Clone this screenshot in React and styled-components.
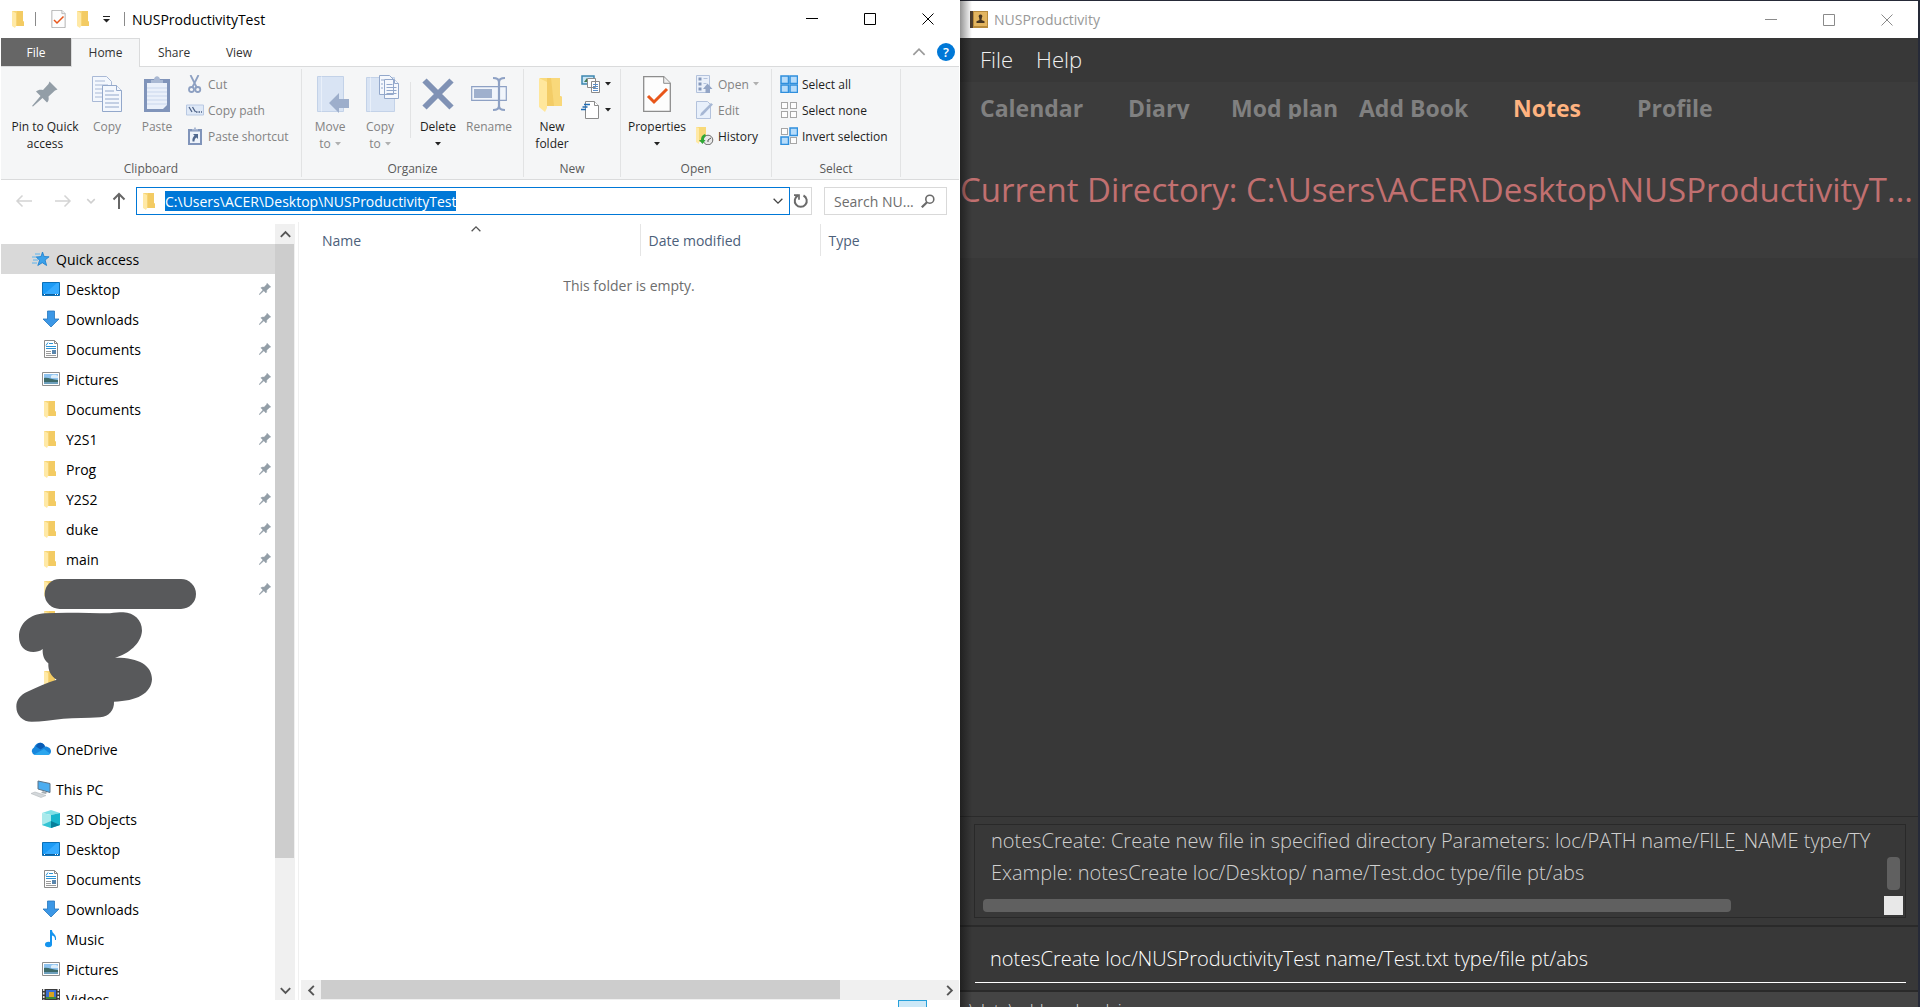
import React from 'react';
import styled, { createGlobalStyle, css } from 'styled-components';

const Global = createGlobalStyle`
  *, *::before, *::after { box-sizing: border-box; }
  body { margin: 0; background: #10131c; overflow: hidden; }
  body, button, input, textarea, table { font-family: "Open Sans", "Noto Sans", sans-serif; }
  button { margin: 0; padding: 0; border: 0; background: none; color: inherit; }
  input, textarea { margin: 0; padding: 0; border: 0; outline: 0; background: none; }
  svg { display: block; flex: none; }
`;

/* ---------- icons ---------- */

const Folder = ({ w = 12, h = 17 }) => (
  <svg width={w} height={h} viewBox="0 0 12 17">
    <path d="M0 0h11v10l1 1v4H0z" fill="#f7d575" />
    <path d="M5 0h6v10l1 1v4H5z" fill="#f3cb63" />
    <path d="M0 0l4 2v13l-1 2-3-2z" fill="#ffe9a6" />
  </svg>
);

const BigFolder = () => (
  <svg width="26" height="36" viewBox="0 0 26 36">
    <path d="M1 2h20v18l2 1v9H1z" fill="#f9da7c" />
    <path d="M8 2h13v18l2 1v9H8z" fill="#f3cc66" />
    <path d="M12 2h9v18l2 1v9h-8z" fill="#fbdd83" opacity=".7" />
    <path d="M0 2l8 4v26l-2 4-6-5z" fill="#ffe79c" />
  </svg>
);

const PIN = 'M17.5 .5l8 8-2.5 1-6.500 6c.5 3.500 0 4.500-1.500 6l-4.500-4.500L1 25.500 0 25l8.500-10L4 10.500c2-1.500 4-2 7-1.500l5.500-6z';
const Pin = ({ size }) => (
  <svg width={size} height={size} viewBox="0 0 26 26"><path d={PIN} fill="#939ea7" stroke="#939ea7" strokeWidth={size < 20 ? 1 : 0} /></svg>
);

const CheckDoc = ({ w, h }) => (
  <svg width={w} height={h} viewBox="0 0 28 36">
    <path d="M.7.7h20l6.600 6.600v28H.7z" fill="#fdfdfd" stroke="#8d8d8d" strokeWidth="1.300" />
    <path d="M20.700.7v6.600h6.600" fill="#eee" stroke="#8d8d8d" />
    <path d="M5 20l6 6L24 13" fill="none" stroke="#e8561a" strokeWidth="3" />
  </svg>
);

const CopyDocs = ({ w = 30, h = 36 }) => (
  <svg width={w} height={h} viewBox="0 0 30 36" fill="#f3f7fd" stroke="#a9b9d6">
    <path d="M.5.500h14l5 5v20H.5z" />
    <path d="M3 5h10M3 9h13M3 13h7M3 17h7M3 21h7" />
    <path d="M10.500 9.500h14l5 5v21h-19z" stroke="#93a8cb" />
    <path d="M24.500 9.500v5h5M13 15h9M13 19h14M13 23h14M13 27h14M13 31h14" stroke="#93a8cb" />
  </svg>
);

const PasteIcon = () => (
  <svg width="26" height="36" viewBox="0 0 26 36">
    <path d="M0 3h26v33H0z" fill="#8094ba" />
    <path d="M3 7h20v22l-4 4H3z" fill="#eaf0fa" />
    <path d="M3 12h20M3 16h20M3 20h20M3 24h20M3 28h20" stroke="#c9d6ec" />
    <path d="M7 7V4h3c0-5 6-5 6 0h3v3z" fill="#a9b8d3" />
  </svg>
);

const CutIcon = () => (
  <svg width="18" height="18" viewBox="0 0 18 18" fill="none" stroke="#8da0c2" strokeWidth="1.800">
    <path d="M4.500 0l6 12M12.500 0l-6 12" /><circle cx="5.500" cy="14.500" r="2.500" /><circle cx="11.800" cy="14.500" r="2.500" />
  </svg>
);

const CopyPathIcon = () => (
  <svg width="18" height="18" viewBox="0 0 18 18">
    <path d="M.5 4h17v10H.5z" fill="#dfe9f7" stroke="#b9c9e3" />
    <path d="M3 6l3 5M6.500 6l3 5M10 11h1.500M12.500 11H14M15 11h1" stroke="#4f6388" strokeWidth="1.300" />
  </svg>
);

const ShortcutIcon = () => (
  <svg width="18" height="18" viewBox="0 0 18 18">
    <path d="M2 2h14v16H2z" fill="#8094ba" /><path d="M4 4.500h10V16H4z" fill="#eef3fb" />
    <path d="M6 3.500V2h2c0-2.500 2-2.500 2 0h2v1.500z" fill="#a9b8d3" />
    <path d="M7 7h5v5l-1.500-1.500c-1.500 1-2 2-2 4H6.500c-.5-3 .5-4.500 2-6z" fill="#51698f" />
  </svg>
);

const MoveIcon = () => (
  <svg width="38" height="38" viewBox="-6 0 38 38">
    <path d="M.5 1.500h26v35H.5z" fill="#d9e4f4" stroke="#c3d2e8" /><path d="M4.500 1.500v35" stroke="#e9f0fa" />
    <path d="M12 28l10-10v6h10v9H22v5z" fill="#9daecb" />
  </svg>
);

const CopyToIcon = () => (
  <svg width="40" height="38" viewBox="-6 0 40 38">
    <path d="M.5 2.500h28v34H.5z" fill="#d9e4f4" stroke="#c3d2e8" /><path d="M4.500 2.500v34" stroke="#e9f0fa" />
    <g fill="#f5f8fd" stroke="#93a8cb">
      <path d="M13.500.5h10l4 4v15h-14zM18.500 4.500h10l4 4v15h-14z" />
      <path d="M28.500 4.500v4h4M20.500 9.500h6M20.500 12.500h10M20.500 15.500h10M20.500 18.500h10M15 5h3M15 9h2M15 13h2" />
    </g>
  </svg>
);

const DeleteIcon = () => (
  <svg width="32" height="38" viewBox="0 0 32 38"><path d="M2.500 5.500l27 27M29.500 5.500l-27 27" stroke="#8092b5" strokeWidth="6" /></svg>
);

const RenameIcon = () => (
  <svg width="36" height="36" viewBox="0 0 36 36" fill="none">
    <path d="M.7 10.700h34.600v13.600H.7z" fill="#f1f5fb" stroke="#8ea1c4" strokeWidth="1.200" /><path d="M3 13h18v9H3z" fill="#9fb0cd" />
    <path d="M22 2c4 0 6 1 6 4v24c0 3-2 4-6 4M34 2c-4 0-6 1-6 4v24c0 3 2 4 6 4" stroke="#8ea1c4" strokeWidth="2.200" />
  </svg>
);

const NewItemIcon = () => (
  <svg width="20" height="20" viewBox="0 0 20 20" fill="#fff" stroke="#8a8a8a">
    <path d="M1 2h12v8H1z" fill="#c9e6f7" stroke="#3d87b0" strokeWidth="1.500" /><path d="M3 8l3-4 2 4z" fill="#3f7b4f" stroke="none" />
    <path d="M6.500 4.500h8v9h-8zM10.500 7.500h8v11h-8z" /><path d="M12 10.500h5M12 12.500h5M12 14.500h5M12 16.500h5" stroke="#5b8fc9" />
  </svg>
);

const EasyAccessIcon = () => (
  <svg width="20" height="20" viewBox="0 0 20 20" fill="#fff" stroke="#8a8a8a">
    <path d="M4.500 1.500h9l4 4v13h-13z" /><path d="M13.500 1.500v4h4" />
    <path d="M3 4.500h6M1.500 7h5M0 9.500h5" stroke="#1f6cb5" strokeWidth="1.400" />
  </svg>
);

const OpenIcon = () => (
  <svg width="18" height="18" viewBox="0 0 18 18">
    <path d="M.5.500h13v17H.5z" fill="#eaf0fa" stroke="#b3c2dc" /><path d="M2.500 2.500h3v3h-3zM2.500 7.500h3v3h-3zM2.500 12.500h3v3h-3z" fill="#8497ba" />
    <path d="M7.500 3.500h4M7.500 8.500h3" stroke="#b3c2dc" /><path d="M11.500 8.500l5 5.500H14v4H9.500v-4H7z" fill="#93a5c6" />
  </svg>
);

const EditIcon = () => (
  <svg width="18" height="18" viewBox="0 0 18 18">
    <path d="M.5.500h11l3 3v14H.5z" fill="#e8f0fb" stroke="#b3c2dc" /><path d="M4 15l1-3 10-10 2 1.500L7 14z" fill="#a6b7d4" />
  </svg>
);

const HistoryIcon = () => (
  <svg width="18" height="18" viewBox="0 0 18 18">
    <path d="M0 0h10v15H0z" fill="#f8d978" /><path d="M0 0l3 1v16l-3-2z" fill="#ffe9a6" />
    <circle cx="12" cy="13" r="4.800" fill="#e8e8e8" stroke="#6c6c6c" /><path d="M12 13l3-2M12 13v2" stroke="#555" />
    <path d="M9 7c-3 1-4 3-4 6H3l3.500 4 3-4H8c0-2 .5-3.500 2-4z" fill="#2fa836" />
  </svg>
);

const TILE_ON = { fill: '#b7dcfa', stroke: '#2f8fdd', strokeWidth: 1.5 };
const TILE_OFF = { fill: '#fdfdfd', stroke: '#a6a6a6', strokeWidth: 1 };
const SelectIcon = ({ tiles }) => (
  <svg width="18" height="18" viewBox="0 0 18 18">
    {tiles.map((on, i) => {
      const x = (i % 2) * 9 + 1;
      const y = Math.floor(i / 2) * 9 + 1;
      return <rect key={i} x={on ? x : x + 0.5} y={on ? y : y + 0.5} width={on ? 7.500 : 6} height={on ? 7.500 : 6} {...(on ? TILE_ON : TILE_OFF)} />;
    })}
  </svg>
);

const Star = () => (
  <svg width="20" height="18" viewBox="0 0 20 18">
    <path d="M11.500 2l1.600 4.500 5 .3-4 3.200 1.500 5.500-4.300-2.800-4.500 2.800 1.800-5.300-3.600-3.200 5-.4z" fill="#3ba1ea" stroke="#1b7ccb" strokeWidth=".8" />
    <path d="M4 4h5M1 7h5M2 10h5M1 13h5" stroke="#5db4ee" />
  </svg>
);

const DesktopIcon = () => (
  <svg width="18" height="14" viewBox="0 0 18 14">
    <path d="M.5.500h17v13H.5z" fill="#1c9bf6" stroke="#0a70b8" /><path d="M1 13L15 1h2v12z" fill="#36abff" /><path d="M1 12.500h16" stroke="#0f5f9c" />
    <path d="M2 12.500h1M13 12.500h1M15 12.500h1" stroke="#fff" />
  </svg>
);

const DownloadIcon = () => (
  <svg width="18" height="18" viewBox="0 0 18 18"><path d="M5.500 1h7v8H17l-8 8-8-8h4.500z" fill="#3b97e6" stroke="#2676bd" strokeWidth=".8" /></svg>
);

const DocIcon = () => (
  <svg width="18" height="18" viewBox="0 0 18 18">
    <path d="M2.500.500h10l3 3v14h-13z" fill="#fff" stroke="#8a8a8a" /><path d="M12.500.500v3h3" fill="none" stroke="#8a8a8a" />
    <path d="M4 5.500l2-3M7 3.500h4M4 6.500h10M4 8.500h10" stroke="#2b93d6" /><path d="M4 11.500h5M4 13.500h5M4 15.500h10" stroke="#9a9a9a" />
    <path d="M10 10h4v4h-4z" fill="#5a86ad" />
  </svg>
);

const PictureIcon = () => (
  <svg width="18" height="14" viewBox="0 0 18 14">
    <path d="M.5.500h17v13H.5z" fill="#fff" stroke="#8f8f8f" /><path d="M2 2h14v10H2z" fill="#8fc3ef" />
    <path d="M2 6c4-1 8 2 14 2v4H2z" fill="#3e6b6a" /><path d="M2 10h14v2H2z" fill="#6ea0bd" /><path d="M9 4c2-2 5-1 7 0v2H9z" fill="#dcedfa" />
  </svg>
);

const CloudIcon = () => (
  <svg width="20" height="14" viewBox="0 0 20 14">
    <path d="M4 13a4 4 0 0 1-1-7.500C5 0 12-1 14 4.500c4 0 6 2.500 6 5S18 13 16 13z" fill="#1786dc" />
    <path d="M5 4.500C7-.5 12-.5 14 4.500L9.500 7.500z" fill="#0a5cb5" /><path d="M3 12.500L13 7l6 4.500c-1 1.500-2 1.500-3 1.500H4z" fill="#2ba6ee" />
  </svg>
);

const PcIcon = () => (
  <svg width="20" height="18" viewBox="0 0 20 18">
    <path d="M7 1l12 2.500v9L7 9z" fill="#4badf0" stroke="#5c7386" /><path d="M12 11l4 1.500-1 1.500-5-1z" fill="#a5adb3" />
    <path d="M0 13.500l4-1.500 11 3.500-5 2z" fill="#d3d7da" stroke="#b3b8bc" strokeWidth=".6" />
  </svg>
);

const CubeIcon = () => (
  <svg width="18" height="18" viewBox="0 0 18 18">
    <path d="M0 3l9-3 9 3-9 2z" fill="#7fe0e6" /><path d="M0 3l9 2v13l-9-3z" fill="#a9eaec" /><path d="M18 3L9 5v13l9-3z" fill="#17b5cc" />
    <path d="M0 15l9-4v7z" fill="#33c3d3" /><path d="M9 11l9 4-9 3z" fill="#067f9a" />
  </svg>
);

const MusicIcon = () => (
  <svg width="18" height="18" viewBox="0 0 18 18">
    <ellipse cx="6.500" cy="14.500" rx="3.500" ry="2.800" fill="#1594ee" /><path d="M8 0h2c0 4 5 4 4 10h-1c0-3-1-4-3-4.500V15H8z" fill="#1594ee" />
  </svg>
);

const VideoIcon = () => (
  <svg width="18" height="20" viewBox="0 0 18 20">
    <path d="M0 0h18v20H0z" fill="#3b3b3b" /><path d="M4 1h10v8H4z" fill="#3c6fd1" /><path d="M7 3h5v5H7z" fill="#d9a520" /><path d="M4 8h10v2H4z" fill="#3c8a3a" />
    <path d="M1.700 0v20M16.300 0v20" stroke="#e6e6e6" strokeWidth="1.600" strokeDasharray="2 1.500" /><path d="M4 12h10v7H4z" fill="#c04040" />
  </svg>
);

const BookIcon = () => (
  <svg width="18" height="17" viewBox="0 0 18 17">
    <path d="M0 0h18v17H0z" fill="#b78a3b" /><path d="M4 1h13v14H4z" fill="#e3b55f" /><path d="M0 0h3v17H0z" fill="#4d3d2d" />
    <path d="M10.500 3.500a1.800 1.800 0 0 1 1.400 3L11.500 9l3 1.200V12h-8v-1.800l3-1.200-.4-2.500a1.800 1.800 0 0 1 1.400-3z" fill="#463522" />
  </svg>
);

const Chevron = ({ dir = 'down', w = 8, color = '#555', stroke = 2 }) => {
  const turn = { down: 0, left: 90, up: 180, right: 270 }[dir];
  return (
    <svg width={w + 4} height={w + 4} viewBox="-8 -8 16 16">
      <path d="M-5-2.500L0 2.500 5-2.500" fill="none" stroke={color} strokeWidth={stroke} transform={`rotate(${turn})`} />
    </svg>
  );
};

const Arrow = ({ dir, color }) => {
  const turn = { left: 0, up: 90, right: 180 }[dir];
  return (
    <svg width="18" height="18" viewBox="-9 -9 18 18">
      <path d="M8 0H-7M-1.500-5.500L-7 0l5.500 5.500" fill="none" stroke={color} strokeWidth={dir === 'up' ? 2 : 1.500} transform={`rotate(${turn})`} />
    </svg>
  );
};

const Caret = ({ color = '#222' }) => (
  <svg width="6" height="4" viewBox="0 0 6 4"><path d="M0 0h6L3 3.500z" fill={color} /></svg>
);

const RefreshIcon = () => (
  <svg width="16" height="16" viewBox="0 0 16 16" fill="none" stroke="#6a6a6a" strokeWidth="2">
    <path d="M10.500 2.500A6 6 0 1 1 5 2.500" /><path d="M1 2.200h5v4.500" strokeWidth="1.700" />
  </svg>
);

const SearchIcon = () => (
  <svg width="14" height="14" viewBox="0 0 14 14" fill="none" stroke="#6a6a6a">
    <circle cx="8.800" cy="5.200" r="4" strokeWidth="1.600" /><path d="M6 8.200L.8 13.300" strokeWidth="2.200" />
  </svg>
);

const GLYPHS = {
  Minimize: <path d="M0 5.500h12" />,
  Maximize: <path d="M.5.500h11v11H.5z" />,
  Close: <path d="M.5.500l11 11M11.500.500l-11 11" />,
};

/* ---------- shared window parts ---------- */

const Screen = styled.div`
  display: grid;
  grid-template-columns: minmax(0, 1fr) minmax(0, 1fr);
  height: 100vh;
`;

const WindowControls = styled.div`
  display: flex;
  margin-left: auto;
  padding-right: 2px;
  align-self: stretch;
`;

const WindowButton = styled.button`
  display: flex;
  align-items: center;
  justify-content: center;
  width: 58px;
`;

const Controls = ({ color }) => (
  <WindowControls>
    {Object.keys(GLYPHS).map((name) => (
      <WindowButton key={name} aria-label={name}>
        <svg width="12" height="12" fill="none" stroke={color}>{GLYPHS[name]}</svg>
      </WindowButton>
    ))}
  </WindowControls>
);

/* ---------- explorer ---------- */

const Explorer = styled.section`
  display: flex;
  flex-direction: column;
  min-width: 0;
  height: 100vh;
  padding: 0 1px;
  background: #fff;
  color: #000;
  font-size: 14px;
`;

const ExplorerTitle = styled.header`
  display: flex;
  align-items: center;
  flex: none;
  gap: 11px;
  height: 38px;
  padding-left: 11px;
  h1 { margin: 0 0 0 -4px; font-size: 14px; font-weight: 400; }
`;

const Divider = styled.span`
  width: 1px;
  height: 14px;
  background: #8a8a8a;
`;

const QuickTools = styled.div`
  display: flex;
  align-items: center;
  gap: 11px;
  padding-left: 4px;
`;

const QuickButton = styled.button`
  display: flex;
  justify-content: center;
`;

const TabRow = styled.nav`
  display: flex;
  flex: none;
  height: 28px;
  font-size: 12px;
  color: #333;
`;

const Tab = styled.button`
  width: ${(p) => p.$width}px;
  font-size: 12px;
  ${(p) => p.$kind === 'file' && css`background: #666; color: #fff;`}
  ${(p) => p.$kind === 'active' && css`
    background: #f5f6f7;
    border: 1px solid #dadbdc;
    border-bottom: 0;
    z-index: 1;
    margin-bottom: -1px;
    padding-bottom: 2px;
  `}
`;

const TabTools = styled.div`
  display: flex;
  align-items: center;
  gap: 9px;
  margin-left: auto;
  padding-right: 4px;
`;

const HelpButton = styled.button`
  width: 18px;
  height: 18px;
  border-radius: 50%;
  background: #0078d7;
  color: #fff;
  font-size: 13px;
  font-weight: 600;
  line-height: 18px;
`;

const Ribbon = styled.div`
  display: flex;
  flex: none;
  height: 114px;
  padding: 2px 0;
  background: #f5f6f7;
  border-top: 1px solid #dadbdc;
  border-bottom: 1px solid #dadbdc;
`;

const Group = styled.fieldset`
  display: flex;
  flex-direction: column;
  min-width: ${(p) => p.$width}px;
  margin: 0;
  padding: 0;
  border: 0;
  border-right: 1px solid #e2e3e4;
`;

const GroupBody = styled.div`
  display: flex;
  flex: 1;
  padding-left: ${(p) => p.$inset}px;
`;

const GroupLabel = styled.span`
  height: 16px;
  line-height: 16px;
  text-align: center;
  font-size: 12px;
  color: #5a5a5a;
`;

const BigButton = styled.button`
  display: flex;
  flex-direction: column;
  align-items: center;
  justify-content: flex-start;
  width: ${(p) => p.$width}px;
  color: ${(p) => (p.$off ? '#838383' : '#1e1e1e')};
  font-size: 12px;
  line-height: 17px;
  white-space: nowrap;
`;

const BigIcon = styled.span`
  display: flex;
  align-items: center;
  justify-content: center;
  height: 38px;
  margin: 6px 0 5px;
`;

const LabelLine = styled.span`
  display: flex;
  align-items: center;
  gap: 4px;
  min-height: 17px;
`;

const GroupSplit = styled.span`
  width: 1px;
  height: 56px;
  margin: 13px 2px 0 5px;
  background: #e2e3e4;
`;

const SmallColumn = styled.div`
  display: flex;
  flex-direction: column;
  padding: 2px 0 0 ${(p) => p.$inset}px;
`;

const SmallButton = styled.button`
  display: flex;
  align-items: center;
  gap: 4px;
  height: 26px;
  color: ${(p) => (p.$off ? '#838383' : '#1e1e1e')};
  font-size: 12px;
  white-space: nowrap;
`;

const Big = ({ icon, lines, width, off, caret }) => (
  <BigButton $width={width} $off={off}>
    <BigIcon>{icon}</BigIcon>
    {lines.map((line, i) => (
      <LabelLine key={i}>
        {line}
        {caret && i === lines.length - 1 && <Caret color={off ? '#b0b0b0' : '#222'} />}
      </LabelLine>
    ))}
  </BigButton>
);

const Small = ({ icon, label, off, caret, name }) => (
  <SmallButton $off={off} aria-label={name}>
    {icon}
    {label}
    {caret && <Caret color={off ? '#b0b0b0' : '#222'} />}
  </SmallButton>
);

const AddressRow = styled.div`
  display: flex;
  align-items: center;
  flex: none;
  height: 42px;
  padding: 0 12px 0 14px;
`;

const NavButtons = styled.div`
  display: flex;
  align-items: center;
  gap: 13px;
  width: 121px;
  button:first-child { margin-right: 8px; }
`;

const AddressBox = styled.div`
  display: flex;
  align-items: center;
  flex: 1;
  min-width: 0;
  height: 28px;
  padding: 0 4px 0 6px;
  border: 1px solid #0078d7;
`;

const AddressInput = styled.input`
  field-sizing: content;
  height: 20px;
  margin: 0 auto 0 10px;
  background: #0078d7;
  color: #fff;
  font-size: 14px;
`;

const RefreshButton = styled.button`
  display: flex;
  align-items: center;
  justify-content: center;
  width: 22px;
  height: 28px;
  border: 1px solid #d9d9d9;
  border-left: 0;
`;

const SearchBox = styled.label`
  display: flex;
  align-items: center;
  width: 123px;
  height: 28px;
  margin-left: 12px;
  padding: 0 11px 0 9px;
  border: 1px solid #d9d9d9;
`;

const SearchInput = styled.input`
  flex: 1;
  min-width: 0;
  font-size: 14px;
  color: #6d6d6d;
  &::placeholder { color: #6d6d6d; opacity: 1; }
`;

const ExplorerBody = styled.div`
  display: flex;
  flex: 1;
  min-height: 0;
`;

const Sidebar = styled.nav`
  position: relative;
  flex: none;
  width: 274px;
  padding-top: 22px;
  overflow: hidden;
`;

const TreeGroup = styled.ul`
  margin: 0 0 10px;
  padding: 0;
  list-style: none;
`;

const TreeRow = styled.li`
  display: flex;
  align-items: center;
  height: 30px;
  padding: 0 4px 0 ${(p) => (p.$root ? 30 : 41)}px;
  background: ${(p) => (p.$selected ? '#d9d9d9' : 'none')};
`;

const TreeIcon = styled.span`
  display: flex;
  justify-content: center;
  width: ${(p) => (p.$root ? 20 : 18)}px;
  margin-right: ${(p) => (p.$root ? 5 : 6)}px;
`;

const TreeLink = styled.a`
  flex: 1;
  color: #000;
  text-decoration: none;
`;

const FolderSlot = styled.span`
  display: flex;
  width: 14px;
`;

const Scribble = styled.svg`
  position: absolute;
  left: 0;
  top: 338px;
`;

const VScroll = styled.div`
  display: flex;
  flex-direction: column;
  flex: none;
  width: 20px;
  margin: 2px 3px 0 0;
  background: #f0f0f0;
`;

const ScrollButton = styled.button`
  display: flex;
  align-items: center;
  justify-content: center;
  flex: none;
  width: 20px;
  height: 20px;
`;

const VThumb = styled.div`
  flex: 0 0 83.4%;
  width: 19px;
  background: #cdcdcd;
`;

const VTrack = styled.div`
  display: flex;
  flex-direction: column;
  flex: 1;
`;

const FilePane = styled.main`
  display: flex;
  flex-direction: column;
  flex: 1;
  min-width: 0;
  border-left: 1px solid #f0f0f0;
`;

const FileTable = styled.table`
  width: 100%;
  margin-top: 2px;
  table-layout: fixed;
  border-collapse: collapse;
  th {
    position: relative;
    height: 32px;
    padding: 0 0 0 8px;
    border-right: 1px solid #e5e5e5;
    color: #4c607a;
    font-weight: 400;
    text-align: left;
  }
  th:first-child { width: 341px; padding-left: 23px; }
  th:nth-child(2) { width: 180px; }
  th:last-child { border-right: 0; }
  td { padding: 20px 0 0; color: #6d6d6d; text-align: center; }
`;

const SortMark = styled.span`
  position: absolute;
  left: 50%;
  top: -2px;
`;

const HScroll = styled.div`
  display: flex;
  height: 20px;
  margin: auto 0 0 2px;
  background: #f0f0f0;
`;

const HTrack = styled.div`
  flex: 1;
`;

const HThumb = styled.div`
  width: 84%;
  height: 19px;
  background: #cdcdcd;
`;

const ExplorerStatus = styled.footer`
  display: flex;
  justify-content: flex-end;
  flex: none;
  height: 7px;
  padding-right: 32px;
  overflow: hidden;
`;

const ViewToggle = styled.button`
  width: 29px;
  height: 24px;
  border: 1px solid #26a0da;
  background: #cce8f7;
`;

const ICONS = {
  desktop: <DesktopIcon />,
  download: <DownloadIcon />,
  doc: <DocIcon />,
  picture: <PictureIcon />,
  folder: <FolderSlot><Folder /></FolderSlot>,
  cube: <CubeIcon />,
  music: <MusicIcon />,
  video: <VideoIcon />,
};

const TREE = [
  {
    root: { icon: <Star />, label: 'Quick access', selected: true },
    items: [
      ['desktop', 'Desktop', true], ['download', 'Downloads', true], ['doc', 'Documents', true], ['picture', 'Pictures', true],
      ['folder', 'Documents', true], ['folder', 'Y2S1', true], ['folder', 'Prog', true], ['folder', 'Y2S2', true],
      ['folder', 'duke', true], ['folder', 'main', true], ['folder', '', true], ['folder', ''], ['folder', ''], ['folder', ''],
      [null, ''],
    ],
  },
  { root: { icon: <CloudIcon />, label: 'OneDrive' }, items: [] },
  {
    root: { icon: <PcIcon />, label: 'This PC' },
    items: [
      ['cube', '3D Objects'], ['desktop', 'Desktop'], ['doc', 'Documents'], ['download', 'Downloads'],
      ['music', 'Music'], ['picture', 'Pictures'], ['video', 'Videos'],
    ],
  },
];

const Tree = () => (
  <Sidebar aria-label="Folders">
    {TREE.map(({ root, items }) => (
      <TreeGroup key={root.label}>
        <TreeRow $root $selected={root.selected}>
          <TreeIcon $root>{root.icon}</TreeIcon>
          <TreeLink href="#">{root.label}</TreeLink>
        </TreeRow>
        {items.map(([icon, label, pinned], i) => (
          <TreeRow key={i}>
            <TreeIcon>{icon && ICONS[icon]}</TreeIcon>
            {label ? <TreeLink href="#">{label}</TreeLink> : <TreeLink as="span" />}
            {pinned && <Pin size={12} />}
          </TreeRow>
        ))}
      </TreeGroup>
    ))}
    <Scribble width="200" height="170" viewBox="3 240 600 510" fill="#58595b">
      <rect x="134" y="297" width="454" height="90" rx="45" />
      <path d="M57 470C57 430 90 402 135 400C200 396 270 400 330 400C345 398 355 397 370 397C402 398 426 420 426 452C424 490 385 522 345 533C415 532 456 555 456 598C454 640 410 664 342 665C343 690 328 709 300 712C260 714 225 714 190 716C155 719 125 725 95 725C68 725 49 706 49 680C49 660 60 645 82 635C110 622 140 608 170 599C152 588 144 572 145 550C132 540 127 525 128 507C120 514 110 516 100 516C75 516 57 498 57 470Z" />
    </Scribble>
  </Sidebar>
);

const ExplorerWindow = () => (
  <Explorer>
    <ExplorerTitle>
      <Folder />
      <Divider />
      <QuickTools>
        <QuickButton aria-label="Properties"><CheckDoc w={15} h={18} /></QuickButton>
        <QuickButton aria-label="New folder"><Folder /></QuickButton>
        <QuickButton aria-label="Customize toolbar">
          <svg width="13" height="7" viewBox="-3 0 13 7"><path d="M0 .5h7" stroke="#222" /><path d="M0 3h7L3.500 6.500z" fill="#222" /></svg>
        </QuickButton>
      </QuickTools>
      <Divider />
      <h1>NUSProductivityTest</h1>
      <Controls color="#000" />
    </ExplorerTitle>

    <TabRow>
      <Tab $width={70} $kind="file">File</Tab>
      <Tab $width={69} $kind="active">Home</Tab>
      <Tab $width={68}>Share</Tab>
      <Tab $width={62}>View</Tab>
      <TabTools>
        <Chevron dir="up" w={14} color="#9a9a9a" stroke={1.5} />
        <HelpButton aria-label="Help">?</HelpButton>
      </TabTools>
    </TabRow>

    <Ribbon>
      <Group $width={301}>
        <GroupBody $inset={7}>
          <Big width={74} icon={<Pin size={26} />} lines={['Pin to Quick', 'access']} />
          <Big width={50} off icon={<CopyDocs />} lines={['Copy']} />
          <Big width={50} off icon={<PasteIcon />} lines={['Paste']} />
          <SmallColumn $inset={4}>
            <Small off icon={<CutIcon />} label="Cut" />
            <Small off icon={<CopyPathIcon />} label="Copy path" />
            <Small off icon={<ShortcutIcon />} label="Paste shortcut" />
          </SmallColumn>
        </GroupBody>
        <GroupLabel>Clipboard</GroupLabel>
      </Group>
      <Group $width={222}>
        <GroupBody $inset={3}>
          <Big width={50} off caret icon={<MoveIcon />} lines={['Move', 'to']} />
          <Big width={50} off caret icon={<CopyToIcon />} lines={['Copy', 'to']} />
          <GroupSplit />
          <Big width={50} caret icon={<DeleteIcon />} lines={['Delete', '']} />
          <Big width={52} off icon={<RenameIcon />} lines={['Rename']} />
        </GroupBody>
        <GroupLabel>Organize</GroupLabel>
      </Group>
      <Group $width={97}>
        <GroupBody $inset={3}>
          <Big width={50} icon={<BigFolder />} lines={['New', 'folder']} />
          <SmallColumn $inset={4}>
            <Small caret icon={<NewItemIcon />} name="New item" />
            <Small caret icon={<EasyAccessIcon />} name="Easy access" />
          </SmallColumn>
        </GroupBody>
        <GroupLabel>New</GroupLabel>
      </Group>
      <Group $width={151}>
        <GroupBody $inset={0}>
          <Big width={72} caret icon={<CheckDoc w={28} h={36} />} lines={['Properties', '']} />
          <SmallColumn $inset={3}>
            <Small off caret icon={<OpenIcon />} label="Open" />
            <Small off icon={<EditIcon />} label="Edit" />
            <Small icon={<HistoryIcon />} label="History" />
          </SmallColumn>
        </GroupBody>
        <GroupLabel>Open</GroupLabel>
      </Group>
      <Group $width={129}>
        <GroupBody $inset={0}>
          <SmallColumn $inset={8}>
            <Small icon={<SelectIcon tiles={[1, 1, 1, 1]} />} label="Select all" />
            <Small icon={<SelectIcon tiles={[0, 0, 0, 0]} />} label="Select none" />
            <Small icon={<SelectIcon tiles={[0, 1, 1, 0]} />} label="Invert selection" />
          </SmallColumn>
        </GroupBody>
        <GroupLabel>Select</GroupLabel>
      </Group>
    </Ribbon>

    <AddressRow>
      <NavButtons>
        <button aria-label="Back"><Arrow dir="left" color="#d4d4d4" /></button>
        <button aria-label="Forward"><Arrow dir="right" color="#d4d4d4" /></button>
        <button aria-label="Recent"><Chevron w={8} color="#cfcfcf" /></button>
        <button aria-label="Up"><Arrow dir="up" color="#666" /></button>
      </NavButtons>
      <AddressBox>
        <Folder />
        <AddressInput aria-label="Address" defaultValue="C:\Users\ACER\Desktop\NUSProductivityTest" />
        <button aria-label="Previous locations"><Chevron w={10} color="#444" stroke={1.5} /></button>
      </AddressBox>
      <RefreshButton aria-label="Refresh"><RefreshIcon /></RefreshButton>
      <SearchBox>
        <SearchInput aria-label="Search" placeholder="Search NU..." />
        <SearchIcon />
      </SearchBox>
    </AddressRow>

    <ExplorerBody>
      <Tree />
      <VScroll>
        <ScrollButton aria-label="Scroll up"><Chevron dir="up" w={11} /></ScrollButton>
        <VTrack><VThumb /></VTrack>
        <ScrollButton aria-label="Scroll down"><Chevron w={11} /></ScrollButton>
      </VScroll>
      <FilePane>
        <FileTable>
          <thead>
            <tr>
              <th scope="col">Name<SortMark><Chevron dir="up" w={10} color="#555" stroke={1.5} /></SortMark></th>
              <th scope="col">Date modified</th>
              <th scope="col">Type</th>
            </tr>
          </thead>
          <tbody>
            <tr><td colSpan={3}>This folder is empty.</td></tr>
          </tbody>
        </FileTable>
        <HScroll>
          <ScrollButton aria-label="Scroll left"><Chevron dir="left" w={11} /></ScrollButton>
          <HTrack><HThumb /></HTrack>
          <ScrollButton aria-label="Scroll right"><Chevron dir="right" w={11} /></ScrollButton>
        </HScroll>
      </FilePane>
    </ExplorerBody>
    <ExplorerStatus><ViewToggle aria-label="Details view" /></ExplorerStatus>
  </Explorer>
);

/* ---------- notes application ---------- */

const Notes = styled.section`
  position: relative;
  display: flex;
  flex-direction: column;
  min-width: 0;
  height: 100vh;
  padding: 1px 2px 0 0;
  background: #262a38;
  color: #e0e0e0;
  &::before {
    content: '';
    position: absolute;
    inset: 0 auto 0 0;
    width: 12px;
    background: linear-gradient(90deg, rgba(0, 0, 0, .42), rgba(0, 0, 0, 0));
    pointer-events: none;
  }
`;

const NotesTitle = styled.header`
  display: flex;
  align-items: center;
  flex: none;
  gap: 6px;
  height: 37px;
  padding-left: 10px;
  background: #fff;
  color: #999;
  h2 { margin: 0; font-size: 14px; font-weight: 400; }
`;

const MenuBar = styled.nav`
  display: flex;
  align-items: center;
  flex: none;
  gap: 23px;
  height: 44px;
  padding: 0 0 2px 20px;
  background: #383838;
  button { color: #f0f0f0; font-size: 22px; font-weight: 300; }
`;

const Header = styled.div`
  flex: none;
  height: 176px;
  background: #3c3c3c;
`;

const NotesTabs = styled.div`
  display: grid;
  grid-template-columns: 148px 103px 128px 154px 124px 1fr;
  height: 37px;
  padding: 9px 0 0 20px;
  overflow: hidden;
`;

const NotesTab = styled.button`
  color: ${(p) => (p.$active ? '#ffb380' : '#808080')};
  font-size: 23px;
  font-weight: 700;
  line-height: 34px;
  text-align: left;
  white-space: nowrap;
`;

const Directory = styled.p`
  margin: 0;
  padding: 47px 0 0;
  color: #c17070;
  font-size: 33px;
  font-weight: 400;
  line-height: 48px;
  white-space: nowrap;
`;

const Canvas = styled.div`
  flex: 1;
  background: #383838;
`;

const ResultSection = styled.div`
  flex: none;
  height: 109px;
  padding: 7px 12px 0 14px;
  background: #383838;
  border-top: 1px solid #2a2a2a;
`;

const ResultBox = styled.div`
  display: grid;
  grid-template-columns: 1fr 22px;
  grid-template-rows: 71px 21px;
  height: 94px;
  border: 1px solid #292929;
`;

const ResultText = styled.textarea`
  width: 100%;
  height: 71px;
  padding-left: 16px;
  overflow: hidden;
  resize: none;
  color: #d0d0d0;
  font-size: 20px;
  font-weight: 300;
  line-height: 32px;
  white-space: pre;
`;

const ThumbV = styled.div`
  align-self: end;
  width: 13px;
  height: 33px;
  margin: 0 0 6px 4px;
  border-radius: 4px;
  background: #606060;
`;

const ThumbH = styled.div`
  width: 82.4%;
  height: 13px;
  margin: 3px 0 0 8px;
  border-radius: 4px;
  background: #606060;
`;

const Corner = styled.div`
  width: 19px;
  height: 19px;
  margin-left: 1px;
  background: #e8e8e8;
`;

const CommandSection = styled.div`
  flex: none;
  height: 65px;
  padding: 10px 12px 0 15px;
  background: #383838;
  border-top: 2px solid #2a2a2a;
`;

const CommandInput = styled.input`
  width: 100%;
  height: 46px;
  padding: 0 0 2px 15px;
  border-bottom: 1px solid #fff;
  color: #fff;
  font-size: 20px;
  font-weight: 300;
`;

const NotesStatus = styled.footer`
  flex: none;
  height: 17px;
  padding: 6px 0 0 9px;
  overflow: hidden;
  background: #444;
  border-top: 2px solid #2a2a2a;
  font-size: 17px;
  font-weight: 300;
  line-height: 24px;
  color: #ddd;
`;

const TABS = ['Calendar', 'Diary', 'Mod plan', 'Add Book', 'Notes', 'Profile'];

const RESULT = [
  'notesCreate: Create new file in specified directory Parameters: loc/PATH name/FILE_NAME type/TY',
  'Example: notesCreate loc/Desktop/ name/Test.doc type/file pt/abs',
].join('\n');

const NotesWindow = () => (
  <Notes>
    <NotesTitle>
      <BookIcon />
      <h2>NUSProductivity</h2>
      <Controls color="#8a8a8a" />
    </NotesTitle>
    <MenuBar>
      <button>File</button>
      <button>Help</button>
    </MenuBar>
    <Header>
      <NotesTabs>
        {TABS.map((t) => <NotesTab key={t} $active={t === 'Notes'}>{t}</NotesTab>)}
      </NotesTabs>
      <Directory>Current Directory: C:\Users\ACER\Desktop\NUSProductivityT...</Directory>
    </Header>
    <Canvas />
    <ResultSection>
      <ResultBox>
        <ResultText aria-label="Result" readOnly value={RESULT} />
        <ThumbV />
        <ThumbH />
        <Corner />
      </ResultBox>
    </ResultSection>
    <CommandSection>
      <CommandInput aria-label="Command" defaultValue="notesCreate loc/NUSProductivityTest name/Test.txt type/file pt/abs" />
    </CommandSection>
    <NotesStatus>\data\addressbook.json</NotesStatus>
  </Notes>
);

export default function App() {
  return (
    <>
      <Global />
      <Screen>
        <ExplorerWindow />
        <NotesWindow />
      </Screen>
    </>
  );
}
